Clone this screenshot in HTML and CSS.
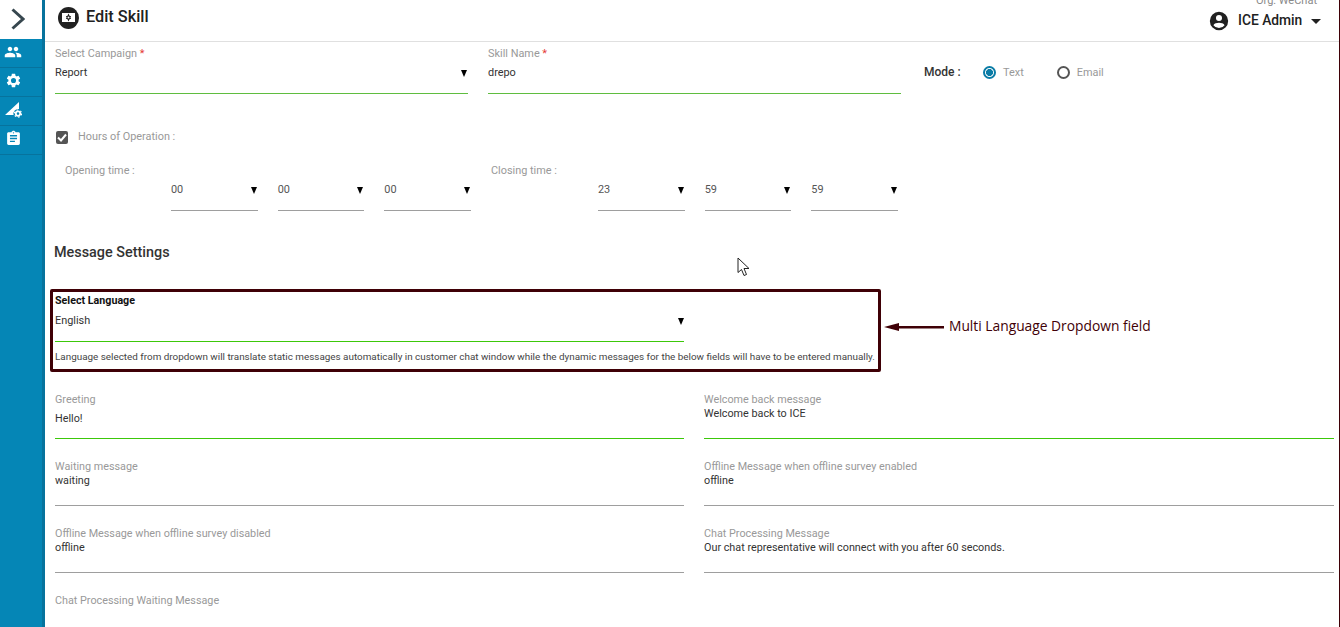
FILE: index.html
```html
<!DOCTYPE html>
<html lang="en">
<head>
<meta charset="utf-8">
<title>Edit Skill</title>
<link rel="stylesheet" href="styles.css">
</head>
<body>
<div class="app">
  <aside class="sidebar">
    <div class="toggle"><svg width="14" height="22" viewBox="0 0 14 22"><path d="M1.5 1.5 L12 11 L1.5 20.5" fill="none" stroke="#37474f" stroke-width="3"/></svg></div>
    <div class="nav-item"><svg width="18" height="18" viewBox="0 0 24 24"><path fill="#fff" d="M16 11c1.66 0 2.99-1.34 2.99-3S17.66 5 16 5s-3 1.34-3 3 1.34 3 3 3zm-8 0c1.66 0 2.99-1.34 2.99-3S9.66 5 8 5 5 6.34 5 8s1.34 3 3 3zm0 2c-2.33 0-7 1.17-7 3.5V19h14v-2.5C15 14.17 10.33 13 8 13zm8 0c-.29 0-.62.02-.97.05 1.16.84 1.97 1.97 1.97 3.45V19h6v-2.5c0-2.33-4.67-3.5-7-3.5z"/></svg></div>
    <div class="nav-item"><svg width="17" height="17" viewBox="0 0 24 24"><path fill="#fff" d="M19.14 12.94c.04-.3.06-.61.06-.94s-.02-.64-.07-.94l2.03-1.58a.49.49 0 0 0 .12-.61l-1.92-3.32a.49.49 0 0 0-.59-.22l-2.39.96c-.5-.38-1.03-.7-1.62-.94l-.36-2.54a.48.48 0 0 0-.48-.41h-3.84c-.24 0-.43.17-.47.41l-.36 2.54c-.59.24-1.13.57-1.62.94l-2.39-.96a.48.48 0 0 0-.59.22L2.74 8.87c-.12.21-.08.47.12.61l2.03 1.58c-.05.3-.09.63-.09.94s.02.64.07.94l-2.03 1.58a.49.49 0 0 0-.12.61l1.92 3.32c.12.22.37.29.59.22l2.39-.96c.5.38 1.03.7 1.62.94l.36 2.54c.05.24.24.41.48.41h3.84c.24 0 .44-.17.47-.41l.36-2.54c.59-.24 1.13-.56 1.62-.94l2.39.96c.22.08.47 0 .59-.22l1.92-3.32c.12-.22.07-.47-.12-.61l-2.01-1.58zM12 15.6A3.6 3.6 0 1 1 12 8.4a3.6 3.6 0 0 1 0 7.2z"/></svg></div>
    <div class="nav-item"><svg width="18" height="18" viewBox="0 0 18 18"><path fill="#fff" d="M1 14 L15 1 V8 A4.8 4.8 0 0 0 9.6 14 Z"/><circle cx="14" cy="12.6" r="2.2" fill="none" stroke="#fff" stroke-width="1.8"/><circle cx="14" cy="12.6" r="3.6" fill="none" stroke="#fff" stroke-width="1.2" stroke-dasharray="1.6 2.2"/></svg></div>
    <div class="nav-item"><svg width="17" height="17" viewBox="0 0 24 24"><path fill="#fff" d="M19 3h-4.18C14.4 1.84 13.3 1 12 1s-2.4.84-2.82 2H5c-1.1 0-2 .9-2 2v14c0 1.1.9 2 2 2h14c1.1 0 2-.9 2-2V5c0-1.1-.9-2-2-2zm-7 0c.55 0 1 .45 1 1s-.45 1-1 1-1-.45-1-1 .45-1 1-1zm2 14H7v-2h7v2zm3-4H7v-2h10v2zm0-4H7V7h10v2z"/></svg></div>
  </aside>

  <div class="main">
    <header class="topbar">
      <div class="title">
        <span class="title-icon"><svg width="13" height="9" viewBox="0 0 13 9"><rect width="13" height="9" fill="#fff"/><path d="M6.5 .6 L9.1 5.9 H3.9 Z M6.5 8.4 L3.9 3.1 H9.1 Z" fill="#212121"/><circle cx="6.5" cy="4.5" r="1" fill="#fff"/></svg></span>
        <h1>Edit Skill</h1>
      </div>
      <div class="account">
        <div class="org">Org: WeChat</div>
        <div class="user">
          <svg width="22" height="22" viewBox="0 0 24 24"><path fill="#212121" d="M12 2a10 10 0 1 0 0 20 10 10 0 0 0 0-20zm0 3.4a3.3 3.3 0 1 1 0 6.6 3.3 3.3 0 0 1 0-6.6zm0 14.2a7.6 7.6 0 0 1-6.1-3.1c.9-1.6 3.6-2.5 6.1-2.5s5.2.9 6.1 2.5A7.6 7.6 0 0 1 12 19.6z"/></svg>
          <span class="user-name">ICE Admin</span>
          <span class="caret"></span>
        </div>
      </div>
    </header>

    <section class="row-top">
      <div class="field f-campaign">
        <label class="lbl">Select Campaign <em>*</em></label>
        <div class="select-line"><span>Report</span><i class="arrow"></i></div>
      </div>
      <div class="field f-skill">
        <label class="lbl">Skill Name <em>*</em></label>
        <div class="select-line"><span>drepo</span></div>
      </div>
      <div class="mode">
        <strong>Mode :</strong>
        <span class="radio on"></span><span class="radio-text">Text</span>
        <span class="radio off"></span><span class="radio-text">Email</span>
      </div>
    </section>

    <div class="hours">
      <span class="check"><svg width="10" height="9" viewBox="0 0 10 9"><path d="M1 4.5 L4 7.5 L9 1.5" fill="none" stroke="#fff" stroke-width="2"/></svg></span>
      <span class="lbl">Hours of Operation :</span>
    </div>

    <section class="times">
      <div class="time-group open">
        <span class="lbl time-lbl">Opening time :</span>
        <div class="time-sel"><span>00</span><i class="arrow"></i></div>
        <div class="time-sel"><span>00</span><i class="arrow"></i></div>
        <div class="time-sel"><span>00</span><i class="arrow"></i></div>
      </div>
      <div class="time-group close">
        <span class="lbl time-lbl">Closing time :</span>
        <div class="time-sel"><span>23</span><i class="arrow"></i></div>
        <div class="time-sel"><span>59</span><i class="arrow"></i></div>
        <div class="time-sel"><span>59</span><i class="arrow"></i></div>
      </div>
    </section>

    <h2>Message Settings</h2>

    <div class="annotated">
      <div class="lang-box">
        <div class="lang-title">Select Language</div>
        <div class="lang-select"><span>English</span><i class="arrow"></i></div>
        <p class="lang-note">Language selected from dropdown will translate static messages automatically in customer chat window while the dynamic messages for the below fields will have to be entered manually.</p>
      </div>
      <svg class="pointer" width="60" height="10" viewBox="0 0 60 10"><path d="M0 5 L15 1 V4 H60 V6.4 H15 V9 Z" fill="#3f0006"/></svg>
      <span class="pointer-text">Multi Language Dropdown field</span>
    </div>

    <section class="messages">
      <div class="msg first"><label class="lbl">Greeting</label><div class="msg-val gap">Hello!</div></div>
      <div class="msg first"><label class="lbl">Welcome back message</label><div class="msg-val">Welcome back to ICE</div></div>
      <div class="msg"><label class="lbl">Waiting message</label><div class="msg-val">waiting</div></div>
      <div class="msg"><label class="lbl">Offline Message when offline survey enabled</label><div class="msg-val">offline</div></div>
      <div class="msg"><label class="lbl">Offline Message when offline survey disabled</label><div class="msg-val">offline</div></div>
      <div class="msg"><label class="lbl">Chat Processing Message</label><div class="msg-val">Our chat representative will connect with you after 60 seconds.</div></div>
      <div class="msg last"><label class="lbl">Chat Processing Waiting Message</label></div>
    </section>
  </div>
</div>
<svg class="cursor" width="14" height="20" viewBox="0 0 14 20"><path d="M1 1 V15.5 L4.5 12.5 L7 18.5 L9.5 17.5 L7 11.5 H12 Z" fill="#fff" stroke="#222" stroke-width="1"/></svg>
</body>
</html>
```
FILE: styles.css
```css
* { box-sizing: border-box; }
html, body { margin: 0; height: 627px; overflow: hidden; background: #fff; }
body { font-family: Roboto, "Liberation Sans", sans-serif; font-size: 10.9px; color: #333; }
.app { display: flex; height: 627px; border-right: 1px solid #3f0006; }
.sidebar { width: 45px; flex: none; background: #0586b6; border-right: 3px solid #07739d; }
.toggle { height: 39px; width: 42px; background: #fff; display: flex; align-items: center; justify-content: center; padding: 0 0 2px 0; }
.toggle svg { margin-left: -6px; }
.nav-item { height: 29px; width: 42px; padding: 0 16px 3px 0; border-bottom: 1px solid #07739d; display: flex; align-items: center; justify-content: center; }
.main { flex: 1; min-width: 0; padding-right: 5px; }
.topbar { height: 42px; border-bottom: 1px solid #e0e0e0; display: flex; justify-content: space-between; overflow: hidden; margin-right: -5px; }
.title { display: flex; align-items: center; gap: 7px; padding: 0 0 6px 13px; }
.title-icon { width: 21px; height: 22px; border-radius: 50%; background: #212121; display: flex; align-items: center; justify-content: center; }
h1 { margin: 0 0 3px; font-size: 16.3px; font-weight: 500; color: #212121; }
.account { width: 131px; }
.org { margin-top: -6px; padding-left: 48px; height: 15px; font-size: 11px; color: #8a8a8a; white-space: nowrap; }
.user { display: flex; align-items: center; height: 24px; }
.user-name { font-size: 13.8px; font-weight: 500; color: #212121; margin: 0 0 2px 8px; }
.caret { margin-left: 9px; border: 5.5px solid transparent; border-top-color: #212121; border-bottom: 0; }
.lbl { display: block; color: #999; line-height: 13px; }
.lbl em { color: #e53935; font-style: normal; }
.row-top { display: flex; padding: 5px 0 0 10px; }
.f-campaign, .f-skill { width: 413px; }
.f-skill { margin-left: 20px; }
.select-line { height: 34px; display: flex; justify-content: space-between; padding-top: 6px; color: #333; border-bottom: 1px solid #5fbd3f; }
.arrow { width: 0; height: 0; margin: 4px 1px 0 0; border: 3.5px solid transparent; border-top: 7px solid #000; border-bottom: 0; }
.mode { display: flex; align-items: center; height: 14px; margin: 18px 0 0 23px; }
.mode strong { font-size: 12px; font-weight: 500; color: #333; width: 59px; }
.radio { width: 13px; height: 13px; border-radius: 50%; border: 2px solid #555; }
.radio.on { border-color: #0a7ca6; background: radial-gradient(circle, #0a7ca6 0 3.2px, #fff 3.8px); }
.radio-text { color: #999; margin: 0 33px 0 7px; }
.hours { display: flex; align-items: center; gap: 10px; padding: 35px 0 0 11px; height: 51px; }
.hours .lbl { margin-top: -2px; }
.check { width: 12px; height: 13px; border-radius: 2px; background: #555; display: flex; align-items: center; justify-content: center; }
.times { display: flex; padding: 19px 0 0 20px; height: 76px; }
.time-group { display: flex; gap: 20px; }
.time-group.open { width: 426px; }
.time-lbl { flex: none; margin-right: -20px; line-height: 13px; }
.open .time-lbl { width: 106px; }
.close .time-lbl { width: 107px; }
.time-sel { width: 86.67px; height: 41px; margin-top: 6px; padding-top: 13px; border-bottom: 1px solid #9e9e9e; display: flex; justify-content: space-between; color: #555; }
h2 { margin: 0; padding: 23px 0 0 9px; height: 68px; font-size: 14.4px; font-weight: 500; line-height: 18px; color: #333; }
.annotated { display: flex; align-items: center; margin-left: 5px; }
.lang-box { width: 831px; height: 83px; border: 3px solid #3f0006; border-radius: 2px; padding: 2px 2px 0; }
.lang-title { font-size: 10.7px; font-weight: 700; color: #111; line-height: 13px; }
.lang-select { width: 629px; height: 28px; margin-top: 7px; border-bottom: 1px solid #3cc80a; display: flex; justify-content: space-between; line-height: 13px; color: #333; }
.lang-select .arrow { margin-right: 0; }
.lang-note { margin: 8px 0 0; font-size: 9.9px; line-height: 13px; white-space: nowrap; color: #444; }
.pointer { margin: 0 0 7px 3px; }
.pointer-text { margin: 0 0 11px 5px; font-family: "Open Sans", sans-serif; font-size: 13.8px; color: #3f0006; white-space: nowrap; }
.messages { display: grid; grid-template-columns: 629px 630px; column-gap: 20px; padding: 21px 0 0 10px; font-size: 10.8px; }
.msg { height: 67px; }
.msg.last { height: 13px; }
.msg-val { height: 33px; line-height: 14px; padding-top: 1px; border-bottom: 1px solid #9e9e9e; color: #333; }
.msg-val.gap { padding-top: 6px; }
.msg.first .msg-val { border-bottom-color: #3cc80a; }
.cursor { position: absolute; left: 737px; top: 257px; }
```
